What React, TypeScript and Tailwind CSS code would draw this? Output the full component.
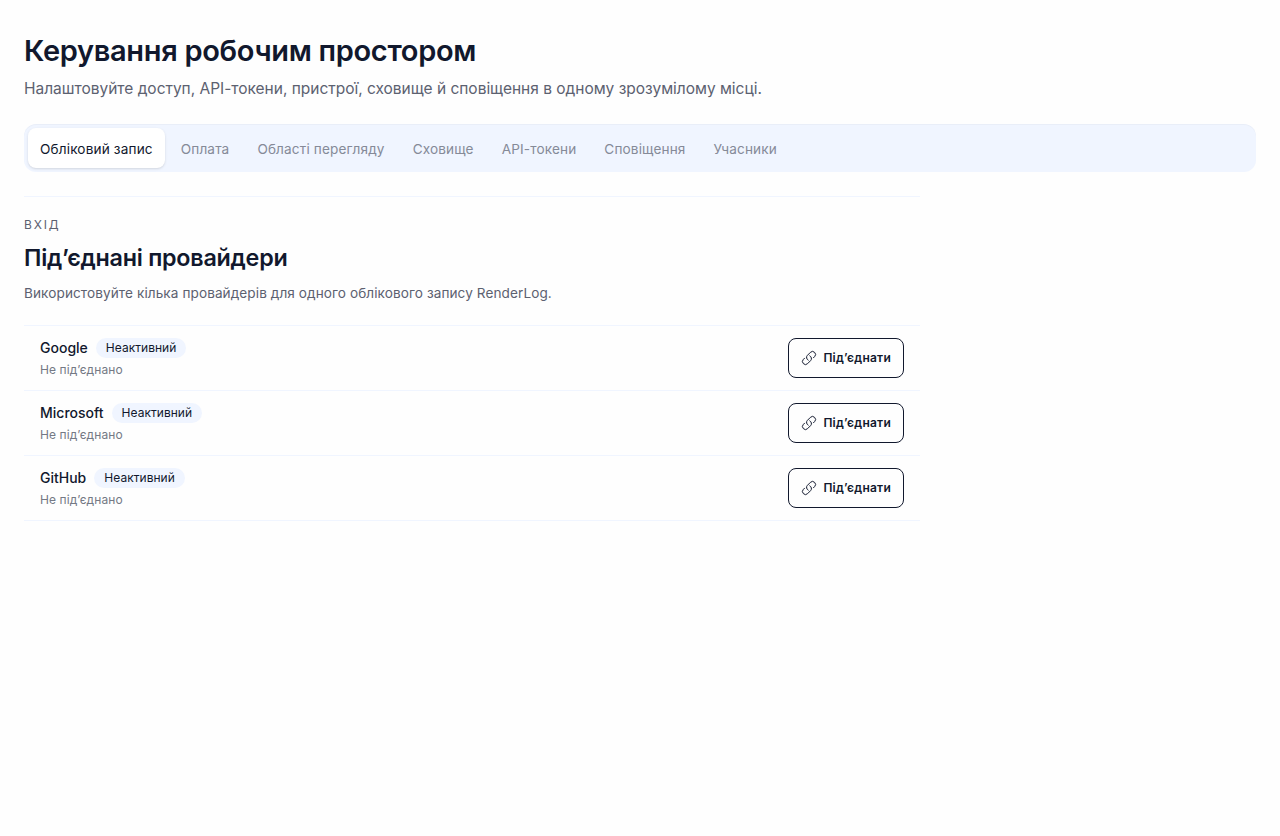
import { useState } from 'react'
import clsx from 'clsx'
import { HiOutlineLink } from 'react-icons/hi2'

const tabs = [
  'Обліковий запис',
  'Оплата',
  'Області перегляду',
  'Сховище',
  'API-токени',
  'Сповіщення',
  'Учасники',
]

const providers = ['Google', 'Microsoft', 'GitHub']

function TabBar() {
  const [active, setActive] = useState(tabs[0])

  return (
    <nav className="mt-6 flex h-12 items-stretch gap-1 rounded-xl bg-[#f0f5ff] p-1 shadow-[inset_0_1px_1px_rgba(17,24,45,0.03)]">
      {tabs.map((tab) => (
        <button
          key={tab}
          onClick={() => setActive(tab)}
          className={clsx(
            'rounded-lg px-3 pt-0.5 text-[13.6px]',
            tab === active
              ? 'bg-white tracking-[0.011em] text-[#11182d] shadow-sm'
              : 'tracking-[0.01em] text-[#858a98]',
          )}
        >
          {tab}
        </button>
      ))}
    </nav>
  )
}

function ProviderRow({ name }: { name: string }) {
  return (
    <li className="flex items-center justify-between border-b border-[#f0f5ff] px-4 py-3">
      <div>
        <div className="flex items-center gap-2">
          <span className="text-sm font-medium text-[#11182d]">{name}</span>
          <span className="rounded-full bg-[#f0f5ff] px-2.5 py-0.5 text-xs tracking-[0.003em] text-[#11182d]">
            Неактивний
          </span>
        </div>
        <p className="mt-1 text-xs tracking-[0.007em] text-[#747985]">Не підʼєднано</p>
      </div>
      <button className="flex h-10 items-center gap-1.5 rounded-lg border border-[#11182d] px-3 text-xs font-semibold tracking-[0.02em] text-[#11182d]">
        <HiOutlineLink className="size-4" />
        Підʼєднати
      </button>
    </li>
  )
}

export default function App() {
  return (
    <main className="min-h-screen bg-[#fefefe] px-6 pt-[33px] font-['Inter',sans-serif]">
      <h1 className="text-[29px] leading-9 font-semibold tracking-[-0.011em] text-[#11182d]">
        Керування робочим простором
      </h1>
      <p className="mt-2 text-[15.5px] leading-6 tracking-[-0.001em] text-[#5c6170]">
        Налаштовуйте доступ, API-токени, пристрої, сховище й сповіщення в одному зрозумілому місці.
      </p>

      <div className="-mt-px">
        <TabBar />
      </div>

      <section className="mt-6 max-w-4xl border-t border-[#f0f5ff] pt-5">
        <p className="text-xs tracking-[0.15em] text-[#5c6170] uppercase">Вхід</p>
        <h2 className="mt-[9px] text-[23.3px] leading-8 font-semibold tracking-[-0.01em] text-[#11182d]">
          Підʼєднані провайдери
        </h2>
        <p className="mt-[7px] text-[13.6px] leading-6 tracking-[0.006em] text-[#5c6170]">
          Використовуйте кілька провайдерів для одного облікового запису RenderLog.
        </p>
        <ul className="mt-5 border-t border-[#f0f5ff]">
          {providers.map((name) => (
            <ProviderRow key={name} name={name} />
          ))}
        </ul>
      </section>
    </main>
  )
}
